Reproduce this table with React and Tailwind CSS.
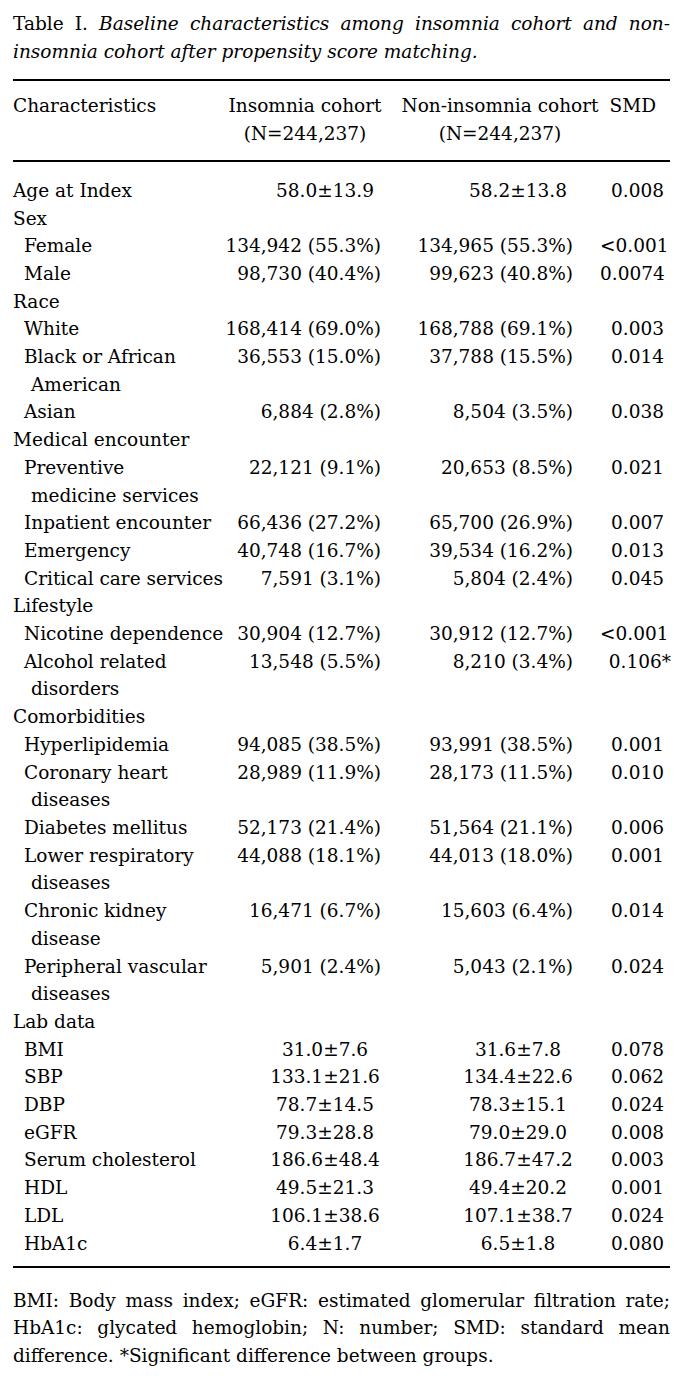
const rows = [
  { label: ["Age at Index"], top: true, a: "58.0±13.9", b: "58.2±13.8", smd: "0.008" },
  { label: ["Sex"], cat: true },
  { label: ["Female"], a: "134,942 (55.3%)", b: "134,965 (55.3%)", smd: "<0.001" },
  { label: ["Male"], a: "98,730 (40.4%)", b: "99,623 (40.8%)", smd: "0.0074" },
  { label: ["Race"], cat: true },
  { label: ["White"], a: "168,414 (69.0%)", b: "168,788 (69.1%)", smd: "0.003" },
  { label: ["Black or African", "American"], a: "36,553 (15.0%)", b: "37,788 (15.5%)", smd: "0.014" },
  { label: ["Asian"], a: "6,884 (2.8%)", b: "8,504 (3.5%)", smd: "0.038" },
  { label: ["Medical encounter"], cat: true },
  { label: ["Preventive", "medicine services"], a: "22,121 (9.1%)", b: "20,653 (8.5%)", smd: "0.021" },
  { label: ["Inpatient encounter"], a: "66,436 (27.2%)", b: "65,700 (26.9%)", smd: "0.007" },
  { label: ["Emergency"], a: "40,748 (16.7%)", b: "39,534 (16.2%)", smd: "0.013" },
  { label: ["Critical care services"], a: "7,591 (3.1%)", b: "5,804 (2.4%)", smd: "0.045" },
  { label: ["Lifestyle"], cat: true },
  { label: ["Nicotine dependence"], a: "30,904 (12.7%)", b: "30,912 (12.7%)", smd: "<0.001" },
  { label: ["Alcohol related", "disorders"], a: "13,548 (5.5%)", b: "8,210 (3.4%)", smd: "0.106", star: true },
  { label: ["Comorbidities"], cat: true },
  { label: ["Hyperlipidemia"], a: "94,085 (38.5%)", b: "93,991 (38.5%)", smd: "0.001" },
  { label: ["Coronary heart", "diseases"], a: "28,989 (11.9%)", b: "28,173 (11.5%)", smd: "0.010" },
  { label: ["Diabetes mellitus"], a: "52,173 (21.4%)", b: "51,564 (21.1%)", smd: "0.006" },
  { label: ["Lower respiratory", "diseases"], a: "44,088 (18.1%)", b: "44,013 (18.0%)", smd: "0.001" },
  { label: ["Chronic kidney", "disease"], a: "16,471 (6.7%)", b: "15,603 (6.4%)", smd: "0.014" },
  { label: ["Peripheral vascular", "diseases"], a: "5,901 (2.4%)", b: "5,043 (2.1%)", smd: "0.024" },
  { label: ["Lab data"], cat: true },
  { label: ["BMI"], a: "31.0±7.6", b: "31.6±7.8", smd: "0.078" },
  { label: ["SBP"], a: "133.1±21.6", b: "134.4±22.6", smd: "0.062" },
  { label: ["DBP"], a: "78.7±14.5", b: "78.3±15.1", smd: "0.024" },
  { label: ["eGFR"], a: "79.3±28.8", b: "79.0±29.0", smd: "0.008" },
  { label: ["Serum cholesterol"], a: "186.6±48.4", b: "186.7±47.2", smd: "0.003" },
  { label: ["HDL"], a: "49.5±21.3", b: "49.4±20.2", smd: "0.001" },
  { label: ["LDL"], a: "106.1±38.6", b: "107.1±38.7", smd: "0.024" },
  { label: ["HbA1c"], a: "6.4±1.7", b: "6.5±1.8", smd: "0.080" },
];

function Row({ row }) {
  const mean = row.a && row.a.includes("±");
  return (
    <div className="flex">
      <div className="w-[209px] shrink-0">
        {row.label.map((line, i) => (
          <div
            key={i}
            className={
              row.cat || row.top
                ? "whitespace-nowrap"
                : i === 0
                ? "pl-[11px] whitespace-nowrap"
                : "pl-[18px] whitespace-nowrap"
            }
          >
            {line}
          </div>
        ))}
      </div>
      {!row.cat && (
        <>
          <div
            className={
              mean
                ? "w-[178px] shrink-0 pl-[28px] text-center whitespace-nowrap"
                : "w-[178px] shrink-0 pr-[19px] text-right whitespace-nowrap"
            }
          >
            {row.a}
          </div>
          <div
            className={
              mean
                ? "w-[200px] shrink-0 pl-[36px] text-center whitespace-nowrap"
                : "w-[200px] shrink-0 pr-[27px] text-right whitespace-nowrap"
            }
          >
            {row.b}
          </div>
          <div className="flex-1 pr-[6px] text-right whitespace-nowrap">
            {row.smd}
            {row.star && <span className="-mr-[7px]">*</span>}
          </div>
        </>
      )}
    </div>
  );
}

export default function App() {
  return (
    <div className="w-[690px] min-h-[1389px] bg-white pl-[13px] pr-[20px] pt-[10px] text-[18.5px] leading-[27.7px] text-black font-['DejaVu_Serif',serif]">
      {/* Caption */}
      <div className="text-justify [text-align-last:justify] whitespace-nowrap">
        Table I. <i>Baseline characteristics among insomnia cohort and non-</i>
      </div>
      <div className="italic whitespace-nowrap">insomnia cohort after propensity score matching.</div>

      <div className="mt-[14px] h-[2px] bg-black" />

      {/* Header */}
      <div className="mt-[11px] flex">
        <div className="w-[209px] shrink-0">Characteristics</div>
        <div className="w-[178px] shrink-0 pr-[12px] text-center whitespace-nowrap">
          <div>Insomnia cohort</div>
          <div>(N=244,237)</div>
        </div>
        <div className="w-[200px] shrink-0 text-center whitespace-nowrap">
          <div>Non-insomnia cohort</div>
          <div>(N=244,237)</div>
        </div>
        <div className="flex-1 pr-[14px] text-right">SMD</div>
      </div>

      <div className="mt-[12px] h-[2px] bg-black" />

      {/* Body */}
      <div className="mt-[15px]">
        {rows.map((row, i) => (
          <Row key={i} row={row} />
        ))}
      </div>

      <div className="mt-[9px] h-[2px] bg-black" />

      {/* Footnote */}
      <div className="mt-[18.5px]">
        <div className="text-justify [text-align-last:justify] whitespace-nowrap">
          BMI: Body mass index; eGFR: estimated glomerular filtration rate;
        </div>
        <div className="text-justify [text-align-last:justify] whitespace-nowrap">
          HbA1c: glycated hemoglobin; N: number; SMD: standard mean
        </div>
        <div className="whitespace-nowrap">difference. *Significant difference between groups.</div>
      </div>
    </div>
  );
}
